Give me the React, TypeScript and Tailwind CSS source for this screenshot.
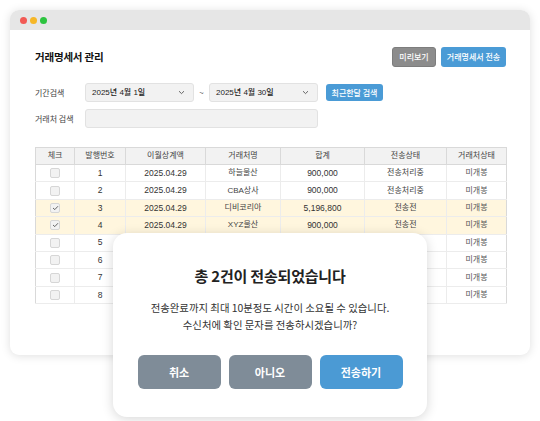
import React from "react";

const rows = [
  { no: 1, date: "2025.04.29", name: "하늘물산", sum: "900,000", st: "전송처리중", ps: "미개봉", checked: false },
  { no: 2, date: "2025.04.29", name: "CBA상사", sum: "900,000", st: "전송처리중", ps: "미개봉", checked: false },
  { no: 3, date: "2025.04.29", name: "디비코리아", sum: "5,196,800", st: "전송전", ps: "미개봉", checked: true },
  { no: 4, date: "2025.04.29", name: "XYZ물산", sum: "900,000", st: "전송전", ps: "미개봉", checked: true },
  { no: 5, date: "", name: "", sum: "", st: "", ps: "미개봉", checked: false },
  { no: 6, date: "", name: "", sum: "", st: "", ps: "미개봉", checked: false },
  { no: 7, date: "", name: "", sum: "", st: "", ps: "미개봉", checked: false },
  { no: 8, date: "", name: "", sum: "", st: "", ps: "미개봉", checked: false },
];

function Chevron() {
  return (
    <svg width="7" height="5" viewBox="0 0 7 5" className="text-[#555]">
      <path d="M1 1.2 L3.5 3.6 L6 1.2" fill="none" stroke="currentColor" strokeWidth="0.9" />
    </svg>
  );
}

function Check({ checked }: { checked: boolean }) {
  return (
    <div className="w-[10px] h-[10px] mx-auto rounded-[2px] border border-[#d6d6d6] bg-[#f2f2f2] flex items-center justify-center">
      {checked && (
        <svg width="7" height="6" viewBox="0 0 7 6">
          <path d="M1 3 L2.8 4.6 L6 1.2" fill="none" stroke="#555" strokeWidth="0.9" />
        </svg>
      )}
    </div>
  );
}

export default function App() {
  const font = { fontFamily: '"Noto Sans CJK KR", "Liberation Sans", sans-serif' };
  return (
    <div className="relative w-[540px] h-[421px] bg-white overflow-hidden" style={font}>
      <div className="pt-[10px] pl-[10px]">
        <div className="w-[520px] h-[345px] rounded-[9px] bg-white shadow-[0_1px_10px_rgba(0,0,0,0.13)] overflow-hidden">
          <div className="h-[20px] bg-[#e6e6e6] flex items-center gap-[3px] pl-[10px]">
            <div className="w-[7px] h-[7px] rounded-full bg-[#f25a55]" />
            <div className="w-[7px] h-[7px] rounded-full bg-[#f6b728]" />
            <div className="w-[7px] h-[7px] rounded-full bg-[#2dc43f]" />
          </div>
          <div className="pl-[25px] pr-[24px] pt-[17px]">
            <div className="flex items-center justify-between h-[20px]">
              <div className="text-[10.5px] font-bold text-[#111] tracking-[-0.2px]">거래명세서 관리</div>
              <div className="flex gap-[5px]">
                <button className="h-[20px] w-[44px] rounded-[3px] bg-[#8c8c8c] text-white text-[8px] font-medium border border-[#7d7d7d]">미리보기</button>
                <button className="h-[20px] w-[65px] rounded-[3px] bg-[#4a9bd6] text-white text-[8px] font-medium">거래명세서 전송</button>
              </div>
            </div>
            <div className="flex items-center mt-[16px] h-[19px]">
              <div className="w-[50px] text-[8px] text-[#444]">기간검색</div>
              <div className="w-[109px] h-[19px] rounded-[3px] border border-[#e2e2e2] bg-[#f2f2f2] flex items-center justify-between pl-[6px] pr-[8px]">
                <span className="text-[8px] font-medium text-[#222]" style={{ fontFamily: '"Liberation Sans", "Noto Sans CJK KR", sans-serif' }}>2025년 4월 1일</span>
                <Chevron />
              </div>
              <div className="w-[15px] text-center text-[8px] text-[#555]">~</div>
              <div className="w-[109px] h-[19px] rounded-[3px] border border-[#e2e2e2] bg-[#f2f2f2] flex items-center justify-between pl-[6px] pr-[8px]">
                <span className="text-[8px] font-medium text-[#222]" style={{ fontFamily: '"Liberation Sans", "Noto Sans CJK KR", sans-serif' }}>2025년 4월 30일</span>
                <Chevron />
              </div>
              <button className="ml-[8px] h-[17px] w-[57px] rounded-[3px] bg-[#4a9bd6] text-white text-[8px] font-medium">최근한달 검색</button>
            </div>
            <div className="flex items-center mt-[7px] h-[19px]">
              <div className="w-[50px] text-[8px] text-[#444]">거래처 검색</div>
              <div className="w-[233px] h-[19px] rounded-[3px] border border-[#e2e2e2] bg-[#f2f2f2]" />
            </div>
            <table className="mt-[19px] w-[471px] border-collapse table-fixed text-[8.5px]" style={{ fontFamily: '"Liberation Sans", "Noto Sans CJK KR", sans-serif' }}>
              <colgroup>
                <col className="w-[39px]" />
                <col className="w-[51px]" />
                <col className="w-[80px]" />
                <col className="w-[75px]" />
                <col className="w-[84px]" />
                <col className="w-[82px]" />
                <col className="w-[60px]" />
              </colgroup>
              <thead>
                <tr className="h-[17px] bg-[#f2f2f2] text-[#444] text-[8px]">
                  {["체크", "발행번호", "이월상계액", "거래처명", "합계", "전송상태", "거래처상태"].map((h) => (
                    <th key={h} className="font-normal border border-[#d9d9d9] p-0">{h}</th>
                  ))}
                </tr>
              </thead>
              <tbody>
                {rows.map((r) => (
                  <tr key={r.no} className={`h-[17.4px] ${r.checked ? "bg-[#fff6de]" : "bg-white"} text-[#333] text-center`}>
                    <td className="border-l border-[#d9d9d9] border-b border-b-[#ececec] border-r border-r-[#ececec] p-0"><Check checked={r.checked} /></td>
                    <td className="border-b border-[#ececec] border-r p-0">{r.no}</td>
                    <td className="border-b border-[#ececec] border-r p-0">{r.date}</td>
                    <td className="border-b border-[#ececec] border-r p-0 text-[#444] text-[8px]">{r.name}</td>
                    <td className="border-b border-[#ececec] border-r p-0">{r.sum}</td>
                    <td className="border-b border-[#ececec] border-r p-0 text-[#444] text-[8px]">{r.st}</td>
                    <td className="border-b border-[#ececec] border-r border-r-[#d9d9d9] p-0 text-[#555] text-[8px]">{r.ps}</td>
                  </tr>
                ))}
                <tr className="h-0"><td colSpan={7} className="border-t border-[#d9d9d9] p-0" /></tr>
              </tbody>
            </table>
          </div>
        </div>
      </div>

      <div className="absolute left-[113px] top-[233px] w-[314px] h-[184px] rounded-[14px] bg-white shadow-[0_2px_12px_rgba(0,0,0,0.16)] flex flex-col items-center pt-[33px]">
        <div className="text-[15px] font-bold text-[#222] leading-[20px] tracking-[-0.2px]">총 2건이 전송되었습니다</div>
        <div className="mt-[13px] text-[10.4px] leading-[17px] text-[#333] text-center">
          <div>전송완료까지 최대 10분정도 시간이 소요될 수 있습니다.</div>
          <div>수신처에 확인 문자를 전송하시겠습니까?</div>
        </div>
        <div className="mt-[22px] flex gap-[8px]">
          <button className="w-[83px] h-[34px] rounded-[6px] bg-[#7f8c98] text-white text-[11px] font-bold">취소</button>
          <button className="w-[83px] h-[34px] rounded-[6px] bg-[#7f8c98] text-white text-[11px] font-bold">아니오</button>
          <button className="w-[83px] h-[34px] rounded-[6px] bg-[#4b9ad4] text-white text-[11px] font-bold">전송하기</button>
        </div>
      </div>
    </div>
  );
}
